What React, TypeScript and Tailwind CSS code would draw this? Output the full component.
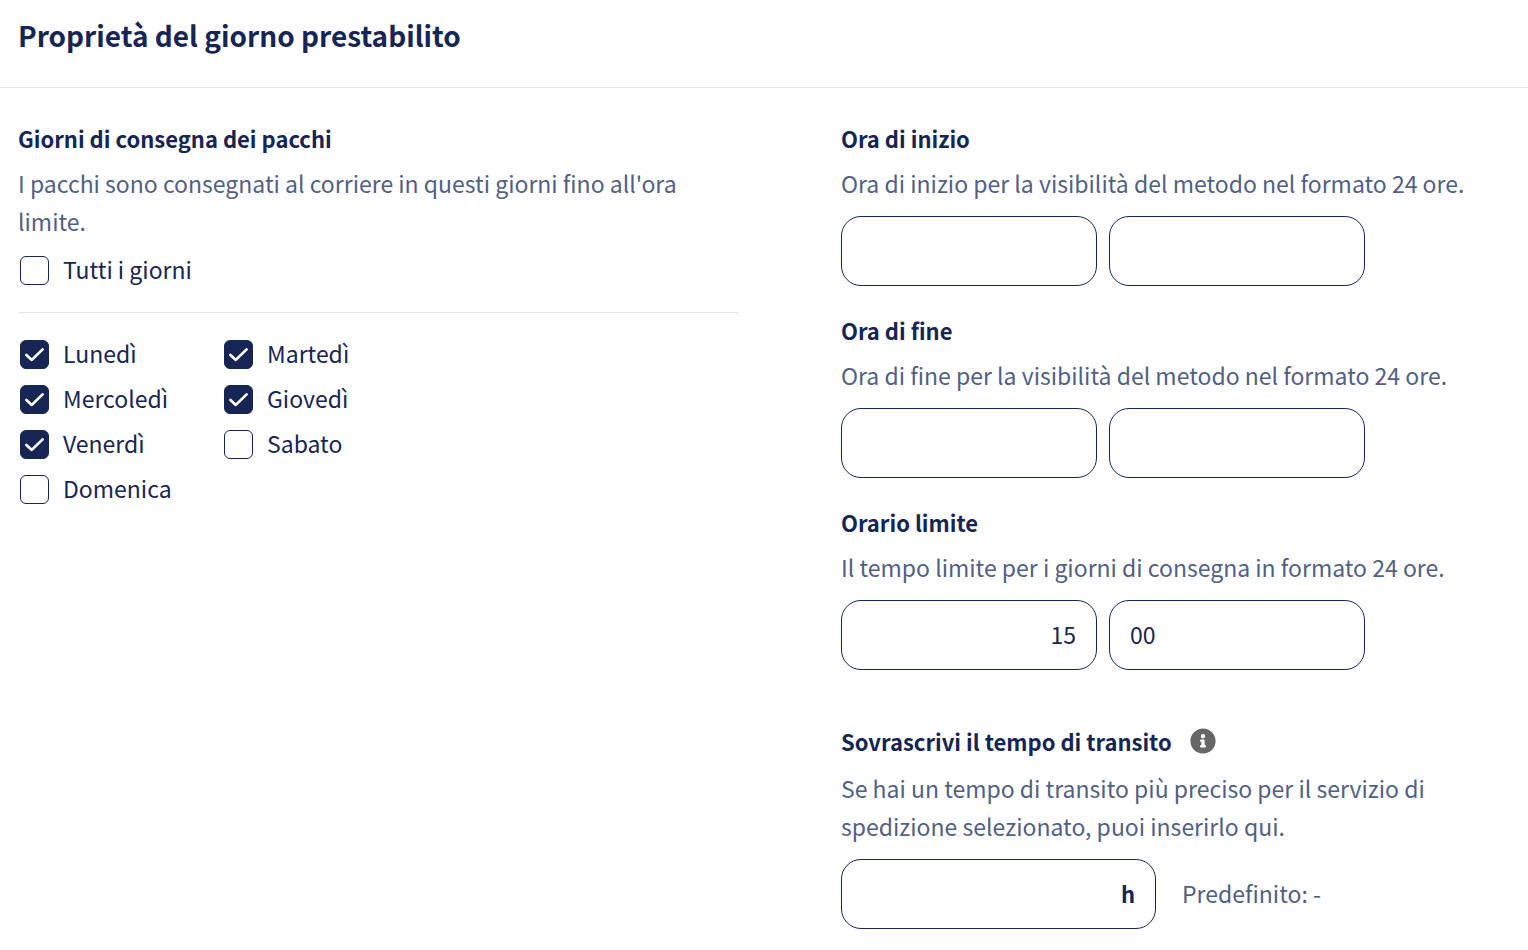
import { useState } from "react";
import { FaInfoCircle } from "react-icons/fa";

type CheckboxProps = {
  label: string;
  checked: boolean;
  onChange: (checked: boolean) => void;
};

function Checkbox({ label, checked, onChange }: CheckboxProps) {
  return (
    <label className="flex h-[45px] items-center gap-[14px] pl-[2px] cursor-pointer">
      <span className="relative h-[29px] w-[29px] shrink-0">
        <input
          type="checkbox"
          checked={checked}
          onChange={(e) => onChange(e.target.checked)}
          className="peer block h-[29px] w-[29px] appearance-none rounded-[6px] border border-[#172554] bg-white checked:bg-[#172554]"
        />
        <svg
          viewBox="0 0 29 29"
          fill="none"
          stroke="white"
          strokeWidth="2.7"
          strokeLinecap="round"
          strokeLinejoin="round"
          className="pointer-events-none absolute inset-0 hidden peer-checked:block"
        >
          <path d="M6.4 14.9 L11.8 19.9 L22.6 9.4" />
        </svg>
      </span>
      <span className="pb-[3px]">{label}</span>
    </label>
  );
}

const inputStyle =
  "h-[70px] w-[256px] min-w-0 rounded-[20px] border border-[#172554] bg-white px-5 pb-[3px] outline-none";

type TimeFieldProps = {
  title: string;
  description: string;
  hours?: string;
  minutes?: string;
};

function TimeField({ title, description, hours = "", minutes = "" }: TimeFieldProps) {
  return (
    <fieldset>
      <legend className="text-[22px] font-semibold">{title}</legend>
      <p className="mt-[7px] text-[#525f85]">{description}</p>
      <div className="mt-[14px] flex gap-3">
        <input
          type="text"
          inputMode="numeric"
          aria-label={`${title}, ore`}
          defaultValue={hours}
          className={`${inputStyle} text-right`}
        />
        <input
          type="text"
          inputMode="numeric"
          aria-label={`${title}, minuti`}
          defaultValue={minutes}
          className={inputStyle}
        />
      </div>
    </fieldset>
  );
}

export default function App() {
  const [days, setDays] = useState([
    { name: "Lunedì", checked: true },
    { name: "Martedì", checked: true },
    { name: "Mercoledì", checked: true },
    { name: "Giovedì", checked: true },
    { name: "Venerdì", checked: true },
    { name: "Sabato", checked: false },
    { name: "Domenica", checked: false },
  ]);

  const allDays = days.every((d) => d.checked);

  return (
    <main className="bg-white font-['Noto_Sans_CJK_SC',sans-serif] text-[23px] leading-[38px] text-[#172554]">
      {/* HEADER */}
      <header className="border-b border-[#e5e5e5] px-[18px] pt-4 pb-[33px]">
        <h1 className="text-[28px] font-semibold">Proprietà del giorno prestabilito</h1>
      </header>

      <div className="grid grid-cols-[720fr_669fr] gap-[103px] px-[18px] pt-[31px] pb-5">
        {/* DAYS */}
        <section>
          <h2 className="text-[22px] font-semibold">Giorni di consegna dei pacchi</h2>
          <p className="mt-[7px] text-[#525f85]">
            I pacchi sono consegnati al corriere in questi giorni fino all'ora limite.
          </p>
          <div className="mt-2 border-b border-[#e5e5e5] pb-[19px]">
            <Checkbox
              label="Tutti i giorni"
              checked={allDays}
              onChange={(checked) => setDays(days.map((d) => ({ ...d, checked })))}
            />
          </div>
          <div className="mt-[19px] grid grid-cols-[204px_204px]">
            {days.map((day) => (
              <Checkbox
                key={day.name}
                label={day.name}
                checked={day.checked}
                onChange={(checked) =>
                  setDays(days.map((d) => (d.name === day.name ? { ...d, checked } : d)))
                }
              />
            ))}
          </div>
        </section>

        {/* TIMES */}
        <section>
          <div className="flex flex-col gap-[25px]">
            <TimeField
              title="Ora di inizio"
              description="Ora di inizio per la visibilità del metodo nel formato 24 ore."
            />
            <TimeField
              title="Ora di fine"
              description="Ora di fine per la visibilità del metodo nel formato 24 ore."
            />
            <TimeField
              title="Orario limite"
              description="Il tempo limite per i giorni di consegna in formato 24 ore."
              hours="15"
              minutes="00"
            />
          </div>

          {/* TRANSIT */}
          <div className="mt-[52px]">
            <div className="flex items-center gap-[18px]">
              <label htmlFor="transit" className="text-[22px] font-semibold">
                Sovrascrivi il tempo di transito
              </label>
              <button type="button" aria-label="Informazioni">
                <FaInfoCircle className="h-[26px] w-[26px] text-[#666666]" />
              </button>
            </div>
            <p className="mt-[9px] text-[#525f85]">
              Se hai un tempo di transito più preciso per il servizio di spedizione selezionato, puoi
              inserirlo qui.
            </p>
            <div className="mt-[14px] flex items-center gap-[26px]">
              <div className="flex h-[70px] w-[315px] items-center rounded-[20px] border border-[#172554] px-5 pb-[3px]">
                <input
                  id="transit"
                  type="text"
                  inputMode="numeric"
                  className="min-w-0 flex-1 bg-transparent text-right outline-none"
                />
                <span className="text-[22px] font-semibold">h</span>
              </div>
              <span className="pb-[3px] text-[#525f85]">Predefinito: -</span>
            </div>
          </div>
        </section>
      </div>
    </main>
  );
}
